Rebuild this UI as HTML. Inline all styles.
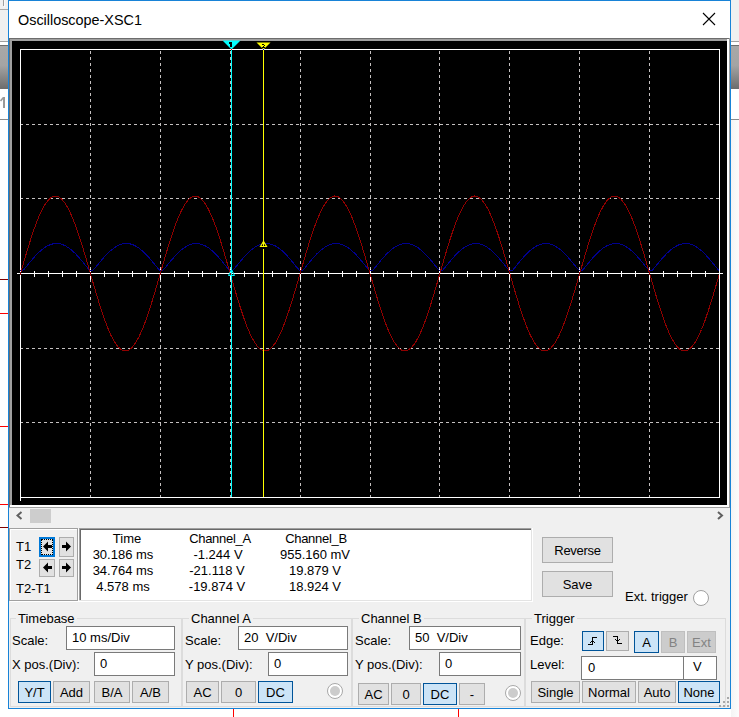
<!DOCTYPE html>
<html><head><meta charset="utf-8">
<style>
html,body{margin:0;padding:0;}
body{width:739px;height:717px;position:relative;overflow:hidden;background:#fff;font-family:"Liberation Sans",sans-serif;font-size:13px;color:#000;}
.a{position:absolute;}
.t{position:absolute;white-space:pre;line-height:15px;font-size:13px;}
.b{position:absolute;box-sizing:border-box;padding-top:1px;border:1px solid #adadad;background:#e1e1e1;text-align:center;white-space:pre;font-size:13px;}
.s{border-color:#005499;background:#cce4f7;}
.d{border-color:#bfbfbf;background:#cccccc;color:#838383;}
.i{position:absolute;box-sizing:border-box;border:1px solid #7a7a7a;background:#fff;}
.c{position:absolute;white-space:pre;line-height:15px;font-size:13px;width:120px;text-align:center;}
</style></head><body>
<!-- background app strips -->
<div class="a" style="left:0;top:0;width:739px;height:41px;background:#f0f0f0"></div>
<div class="a" style="left:0;top:41px;width:739px;height:1px;background:#a0a0a0"></div>
<div class="a" style="left:0;top:45px;width:739px;height:1px;background:#6e6e6e"></div>
<div class="a" style="left:0;top:46px;width:739px;height:43px;background:linear-gradient(#a8a8a8,#a4a4a4 45%,#6c6c6c)"></div>
<div class="a" style="left:0;top:119px;width:739px;height:1px;background:#8a8a8a"></div>
<div class="a" style="left:3px;top:0;width:1px;height:6px;background:#a0a0a0"></div>
<div class="a" style="left:4px;top:0;width:1px;height:7px;background:#fafafa"></div>
<div class="a" style="left:0;top:9px;width:8px;height:1px;background:#a8a8a8"></div>
<svg class="a" style="left:0;top:90px" width="8" height="20"><rect x="3" y="7" width="2" height="11" fill="#9a9a9a"/><path d="M0.5,11 L3.5,7.5" stroke="#9a9a9a" stroke-width="1.6"/></svg>
<div class="a" style="left:0;top:279px;width:8px;height:1px;background:#800000"></div>
<div class="a" style="left:0;top:313px;width:8px;height:1px;background:#ff0000"></div>
<div class="a" style="left:0;top:426px;width:8px;height:1px;background:#ff0000"></div>
<div class="a" style="left:0;top:504px;width:8px;height:1px;background:#ff0000"></div>
<div class="a" style="left:0;top:527px;width:8px;height:1px;background:#800000"></div>
<div class="a" style="left:233px;top:709px;width:1px;height:8px;background:#ff0000"></div>
<div class="a" style="left:458px;top:709px;width:1px;height:8px;background:#ff0000"></div>
<div class="a" style="left:731px;top:120px;width:8px;height:597px;background:linear-gradient(90deg,#f4f4f4,#fcfcfc)"></div>

<!-- window -->
<div class="a" style="left:8px;top:0;width:723px;height:709px;box-sizing:border-box;border:1px solid #1883d7;background:#f0f0f0"></div>
<div class="a" style="left:9px;top:1px;width:721px;height:37px;background:#fff"></div>
<div class="t" style="left:18px;top:12px;font-size:14.4px;line-height:16px">Oscilloscope-XSC1</div>
<svg class="a" style="left:0;top:0" width="739" height="40"><path d="M703,13 L715,25 M715,13 L703,25" stroke="#000" stroke-width="1.1"/></svg>

<!-- scope frame -->
<div class="a" style="left:9px;top:38px;width:721px;height:470px;background:#a0a0a0"></div>
<div class="a" style="left:9px;top:38px;width:720px;height:469px;background:#6d6d6d"></div>
<div class="a" style="left:10px;top:39px;width:719px;height:468px;background:#fff"></div>
<div class="a" style="left:10px;top:39px;width:717px;height:466px;background:#a0a0a0"></div>
<svg class="a" style="left:0;top:0" width="739" height="510" shape-rendering="crispEdges">
<rect x="12" y="41" width="715" height="464" fill="#000"/>
<path d="M90.5,51V497" stroke="#c4c0c0" stroke-dasharray="3 3"/>
<path d="M160.5,51V497" stroke="#c4c0c0" stroke-dasharray="3 3"/>
<path d="M230.5,51V497" stroke="#c4c0c0" stroke-dasharray="3 3"/>
<path d="M300.5,51V497" stroke="#c4c0c0" stroke-dasharray="3 3"/>
<path d="M370.5,51V497" stroke="#c4c0c0" stroke-dasharray="3 3"/>
<path d="M439.5,51V497" stroke="#c4c0c0" stroke-dasharray="3 3"/>
<path d="M509.5,51V497" stroke="#c4c0c0" stroke-dasharray="3 3"/>
<path d="M579.5,51V497" stroke="#c4c0c0" stroke-dasharray="3 3"/>
<path d="M649.5,51V497" stroke="#c4c0c0" stroke-dasharray="3 3"/>
<path d="M20,124.5H719" stroke="#c4c0c0" stroke-dasharray="3 3"/>
<path d="M20,198.5H719" stroke="#c4c0c0" stroke-dasharray="3 3"/>
<path d="M20,348.5H719" stroke="#c4c0c0" stroke-dasharray="3 3"/>
<path d="M20,422.5H719" stroke="#c4c0c0" stroke-dasharray="3 3"/>
<rect x="20" y="49" width="700" height="1" fill="#fff"/>
<rect x="20" y="497" width="700" height="1" fill="#fff"/>
<rect x="20" y="49" width="1" height="452" fill="#fff"/>
<rect x="719" y="50" width="1" height="448" fill="#fff"/>
<rect x="17" y="273" width="706" height="1" fill="#fff"/>
<rect x="34" y="271" width="1" height="6" fill="#fff"/>
<rect x="48" y="271" width="1" height="6" fill="#fff"/>
<rect x="62" y="271" width="1" height="6" fill="#fff"/>
<rect x="76" y="271" width="1" height="6" fill="#fff"/>
<rect x="90" y="269" width="1" height="11" fill="#fff"/>
<rect x="104" y="271" width="1" height="6" fill="#fff"/>
<rect x="118" y="271" width="1" height="6" fill="#fff"/>
<rect x="132" y="271" width="1" height="6" fill="#fff"/>
<rect x="146" y="271" width="1" height="6" fill="#fff"/>
<rect x="160" y="269" width="1" height="11" fill="#fff"/>
<rect x="174" y="271" width="1" height="6" fill="#fff"/>
<rect x="188" y="271" width="1" height="6" fill="#fff"/>
<rect x="202" y="271" width="1" height="6" fill="#fff"/>
<rect x="216" y="271" width="1" height="6" fill="#fff"/>
<rect x="230" y="269" width="1" height="11" fill="#fff"/>
<rect x="244" y="271" width="1" height="6" fill="#fff"/>
<rect x="258" y="271" width="1" height="6" fill="#fff"/>
<rect x="272" y="271" width="1" height="6" fill="#fff"/>
<rect x="286" y="271" width="1" height="6" fill="#fff"/>
<rect x="300" y="269" width="1" height="11" fill="#fff"/>
<rect x="314" y="271" width="1" height="6" fill="#fff"/>
<rect x="328" y="271" width="1" height="6" fill="#fff"/>
<rect x="342" y="271" width="1" height="6" fill="#fff"/>
<rect x="356" y="271" width="1" height="6" fill="#fff"/>
<rect x="370" y="269" width="1" height="11" fill="#fff"/>
<rect x="383" y="271" width="1" height="6" fill="#fff"/>
<rect x="397" y="271" width="1" height="6" fill="#fff"/>
<rect x="411" y="271" width="1" height="6" fill="#fff"/>
<rect x="425" y="271" width="1" height="6" fill="#fff"/>
<rect x="439" y="269" width="1" height="11" fill="#fff"/>
<rect x="453" y="271" width="1" height="6" fill="#fff"/>
<rect x="467" y="271" width="1" height="6" fill="#fff"/>
<rect x="481" y="271" width="1" height="6" fill="#fff"/>
<rect x="495" y="271" width="1" height="6" fill="#fff"/>
<rect x="509" y="269" width="1" height="11" fill="#fff"/>
<rect x="523" y="271" width="1" height="6" fill="#fff"/>
<rect x="537" y="271" width="1" height="6" fill="#fff"/>
<rect x="551" y="271" width="1" height="6" fill="#fff"/>
<rect x="565" y="271" width="1" height="6" fill="#fff"/>
<rect x="579" y="269" width="1" height="11" fill="#fff"/>
<rect x="593" y="271" width="1" height="6" fill="#fff"/>
<rect x="607" y="271" width="1" height="6" fill="#fff"/>
<rect x="621" y="271" width="1" height="6" fill="#fff"/>
<rect x="635" y="271" width="1" height="6" fill="#fff"/>
<rect x="649" y="269" width="1" height="11" fill="#fff"/>
<rect x="663" y="271" width="1" height="6" fill="#fff"/>
<rect x="677" y="271" width="1" height="6" fill="#fff"/>
<rect x="691" y="271" width="1" height="6" fill="#fff"/>
<rect x="705" y="271" width="1" height="6" fill="#fff"/>
<polyline points="20.0,270.5 23.5,270.0 27.0,265.8 30.5,261.5 34.0,257.4 37.5,253.6 41.0,250.4 44.5,247.7 48.0,245.6 51.5,244.2 55.0,243.5 58.4,243.5 61.9,244.3 65.4,245.8 68.9,248.0 72.4,250.8 75.9,254.1 79.4,258.0 82.9,262.1 86.4,266.5 89.9,270.5 93.4,270.0 96.9,265.8 100.4,261.5 103.9,257.4 107.4,253.6 110.9,250.4 114.4,247.7 117.9,245.6 121.4,244.2 124.8,243.5 128.3,243.5 131.8,244.3 135.3,245.8 138.8,248.0 142.3,250.8 145.8,254.1 149.3,258.0 152.8,262.1 156.3,266.5 159.8,270.5 163.3,270.0 166.8,265.8 170.3,261.5 173.8,257.4 177.3,253.6 180.8,250.4 184.3,247.7 187.8,245.6 191.3,244.2 194.8,243.5 198.2,243.5 201.7,244.3 205.2,245.8 208.7,248.0 212.2,250.8 215.7,254.1 219.2,258.0 222.7,262.1 226.2,266.5 229.7,270.5 233.2,270.0 236.7,265.8 240.2,261.5 243.7,257.4 247.2,253.6 250.7,250.4 254.2,247.7 257.7,245.6 261.2,244.2 264.6,243.5 268.1,243.5 271.6,244.3 275.1,245.8 278.6,248.0 282.1,250.8 285.6,254.1 289.1,258.0 292.6,262.1 296.1,266.5 299.6,270.5 303.1,270.0 306.6,265.8 310.1,261.5 313.6,257.4 317.1,253.6 320.6,250.4 324.1,247.7 327.6,245.6 331.1,244.2 334.6,243.5 338.0,243.5 341.5,244.3 345.0,245.8 348.5,248.0 352.0,250.8 355.5,254.1 359.0,258.0 362.5,262.1 366.0,266.5 369.5,270.5 373.0,270.0 376.5,265.8 380.0,261.5 383.5,257.4 387.0,253.6 390.5,250.4 394.0,247.7 397.5,245.6 401.0,244.2 404.4,243.5 407.9,243.5 411.4,244.3 414.9,245.8 418.4,248.0 421.9,250.8 425.4,254.1 428.9,258.0 432.4,262.1 435.9,266.5 439.4,270.5 442.9,270.0 446.4,265.8 449.9,261.5 453.4,257.4 456.9,253.6 460.4,250.4 463.9,247.7 467.4,245.6 470.9,244.2 474.4,243.5 477.8,243.5 481.3,244.3 484.8,245.8 488.3,248.0 491.8,250.8 495.3,254.1 498.8,258.0 502.3,262.1 505.8,266.5 509.3,270.5 512.8,270.0 516.3,265.8 519.8,261.5 523.3,257.4 526.8,253.6 530.3,250.4 533.8,247.7 537.3,245.6 540.8,244.2 544.2,243.5 547.7,243.5 551.2,244.3 554.7,245.8 558.2,248.0 561.7,250.8 565.2,254.1 568.7,258.0 572.2,262.1 575.7,266.5 579.2,270.5 582.7,270.0 586.2,265.8 589.7,261.5 593.2,257.4 596.7,253.6 600.2,250.4 603.7,247.7 607.2,245.6 610.7,244.2 614.1,243.5 617.6,243.5 621.1,244.3 624.6,245.8 628.1,248.0 631.6,250.8 635.1,254.1 638.6,258.0 642.1,262.1 645.6,266.5 649.1,270.5 652.6,270.0 656.1,265.8 659.6,261.5 663.1,257.4 666.6,253.6 670.1,250.4 673.6,247.7 677.1,245.6 680.6,244.2 684.0,243.5 687.5,243.5 691.0,244.3 694.5,245.8 698.0,248.0 701.5,250.8 705.0,254.1 708.5,258.0 712.0,262.1 715.5,266.5 719.0,270.5" fill="none" stroke="#000090" stroke-width="1"/>
<polyline points="20.0,275.2 23.5,263.1 27.0,251.2 30.5,239.9 34.0,229.4 37.5,219.9 41.0,211.8 44.5,205.3 48.0,200.3 51.5,197.2 55.0,196.0 58.4,196.7 61.9,199.3 65.4,203.7 68.9,209.8 72.4,217.5 75.9,226.5 79.4,236.8 82.9,247.9 86.4,259.7 89.9,271.8 93.4,283.9 96.9,295.8 100.4,307.1 103.9,317.6 107.4,327.1 110.9,335.2 114.4,341.7 117.9,346.7 121.4,349.8 124.8,351.0 128.3,350.3 131.8,347.7 135.3,343.3 138.8,337.2 142.3,329.5 145.8,320.5 149.3,310.2 152.8,299.1 156.3,287.3 159.8,275.2 163.3,263.1 166.8,251.2 170.3,239.9 173.8,229.4 177.3,219.9 180.8,211.8 184.3,205.3 187.8,200.3 191.3,197.2 194.8,196.0 198.2,196.7 201.7,199.3 205.2,203.7 208.7,209.8 212.2,217.5 215.7,226.5 219.2,236.8 222.7,247.9 226.2,259.7 229.7,271.8 233.2,283.9 236.7,295.8 240.2,307.1 243.7,317.6 247.2,327.1 250.7,335.2 254.2,341.7 257.7,346.7 261.2,349.8 264.6,351.0 268.1,350.3 271.6,347.7 275.1,343.3 278.6,337.2 282.1,329.5 285.6,320.5 289.1,310.2 292.6,299.1 296.1,287.3 299.6,275.2 303.1,263.1 306.6,251.2 310.1,239.9 313.6,229.4 317.1,219.9 320.6,211.8 324.1,205.3 327.6,200.3 331.1,197.2 334.6,196.0 338.0,196.7 341.5,199.3 345.0,203.7 348.5,209.8 352.0,217.5 355.5,226.5 359.0,236.8 362.5,247.9 366.0,259.7 369.5,271.8 373.0,283.9 376.5,295.8 380.0,307.1 383.5,317.6 387.0,327.1 390.5,335.2 394.0,341.7 397.5,346.7 401.0,349.8 404.4,351.0 407.9,350.3 411.4,347.7 414.9,343.3 418.4,337.2 421.9,329.5 425.4,320.5 428.9,310.2 432.4,299.1 435.9,287.3 439.4,275.2 442.9,263.1 446.4,251.2 449.9,239.9 453.4,229.4 456.9,219.9 460.4,211.8 463.9,205.3 467.4,200.3 470.9,197.2 474.4,196.0 477.8,196.7 481.3,199.3 484.8,203.7 488.3,209.8 491.8,217.5 495.3,226.5 498.8,236.8 502.3,247.9 505.8,259.7 509.3,271.8 512.8,283.9 516.3,295.8 519.8,307.1 523.3,317.6 526.8,327.1 530.3,335.2 533.8,341.7 537.3,346.7 540.8,349.8 544.2,351.0 547.7,350.3 551.2,347.7 554.7,343.3 558.2,337.2 561.7,329.5 565.2,320.5 568.7,310.2 572.2,299.1 575.7,287.3 579.2,275.2 582.7,263.1 586.2,251.2 589.7,239.9 593.2,229.4 596.7,219.9 600.2,211.8 603.7,205.3 607.2,200.3 610.7,197.2 614.1,196.0 617.6,196.7 621.1,199.3 624.6,203.7 628.1,209.8 631.6,217.5 635.1,226.5 638.6,236.8 642.1,247.9 645.6,259.7 649.1,271.8 652.6,283.9 656.1,295.8 659.6,307.1 663.1,317.6 666.6,327.1 670.1,335.2 673.6,341.7 677.1,346.7 680.6,349.8 684.0,351.0 687.5,350.3 691.0,347.7 694.5,343.3 698.0,337.2 701.5,329.5 705.0,320.5 708.5,310.2 712.0,299.1 715.5,287.3 719.0,275.2" fill="none" stroke="#900000" stroke-width="1"/>
<rect x="231" y="49" width="1" height="448" fill="#00ffff"/>
<rect x="263" y="49" width="1" height="448" fill="#ffff00"/>
<polygon points="222.5,40.5 240.5,40.5 231.5,49.5" fill="#00ffff" shape-rendering="auto"/>
<polygon points="256.5,42.5 270.5,42.5 263.5,49.5" fill="#ffff00" shape-rendering="auto"/>
<rect x="229" y="42" width="1" height="2" fill="#000"/>
<rect x="230" y="42" width="2" height="5" fill="#000"/>
<rect x="262" y="44" width="2" height="1" fill="#000"/>
<rect x="264" y="45" width="1" height="1" fill="#000"/>
<rect x="263" y="46" width="1" height="1" fill="#000"/>
<rect x="262" y="47" width="3" height="1" fill="#000"/>
<rect x="231" y="49" width="1" height="1" fill="#ff0000"/>
<rect x="263" y="49" width="1" height="1" fill="#0000ff"/>
<path d="M228.5,275.5 L231.5,269.5 L234.5,275.5 Z" fill="none" stroke="#00ffff" stroke-width="1" shape-rendering="auto"/>
<rect x="263" y="247" width="1" height="2" fill="#000"/>
<path d="M260.5,246.5 L263.5,241.5 L266.5,246.5 Z" fill="none" stroke="#ffff00" stroke-width="1.2" shape-rendering="auto"/>
</svg>

<!-- scrollbar -->
<div class="a" style="left:9px;top:508px;width:721px;height:20px;background:#f0f0f0"></div>
<div class="a" style="left:30px;top:509px;width:21px;height:14px;background:#cdcdcd"></div>
<svg class="a" style="left:0;top:500px" width="739" height="30"><path d="M21.5,12 L17.5,15.5 L21.5,19 M718,12 L722,15.5 L718,19" stroke="#606060" stroke-width="2" fill="none"/></svg>

<!-- T panel (etched) -->
<div class="a" style="left:10px;top:529px;width:69px;height:73px;box-sizing:border-box;border:1px solid #fff"></div>
<div class="a" style="left:9px;top:528px;width:69px;height:73px;box-sizing:border-box;border:1px solid #a0a0a0"></div>
<div class="t" style="left:16px;top:539px">T1</div>
<div class="t" style="left:16px;top:557px">T2</div>
<div class="t" style="left:16px;top:581px">T2-T1</div>
<div class="b" style="left:39px;top:537px;width:16px;height:20px;border:2px solid #0078d7"></div>
<div class="a" style="left:41px;top:539px;width:12px;height:16px;box-sizing:border-box;border:1px dotted #000"></div>
<div class="b" style="left:59px;top:537px;width:15px;height:20px"></div>
<div class="b" style="left:39px;top:559px;width:16px;height:18px"></div>
<div class="b" style="left:59px;top:559px;width:15px;height:18px"></div>
<svg class="a" style="left:0;top:530px" width="80" height="60"><g transform="translate(0,-0.5)">
<path d="M43,17 L48,12 L48,15.5 L52,15.5 L52,18.5 L48,18.5 L48,22 Z" fill="#000"/>
<path d="M71,17 L66,12 L66,15.5 L62,15.5 L62,18.5 L66,18.5 L66,22 Z" fill="#000"/>
<path d="M43,38 L48,33 L48,36.5 L52,36.5 L52,39.5 L48,39.5 L48,43 Z" fill="#000"/>
<path d="M71,38 L66,33 L66,36.5 L62,36.5 L62,39.5 L66,39.5 L66,43 Z" fill="#000"/>
</g></svg>

<!-- readout (sunken) -->
<div class="a" style="left:79px;top:528px;width:454px;height:74px;background:#fff"></div>
<div class="a" style="left:79px;top:528px;width:453px;height:73px;background:#e3e3e3"></div>
<div class="a" style="left:79px;top:528px;width:452px;height:72px;background:#a0a0a0"></div>
<div class="a" style="left:80px;top:529px;width:451px;height:71px;background:#696969"></div>
<div class="a" style="left:81px;top:530px;width:450px;height:70px;background:#fff"></div>
<div class="c" style="left:67px;top:531px">Time</div>
<div class="c" style="left:160px;top:531px;letter-spacing:-0.3px">Channel_A</div>
<div class="c" style="left:256px;top:531px;letter-spacing:-0.3px">Channel_B</div>
<div class="c" style="left:63px;top:547px">30.186 ms</div>
<div class="c" style="left:158px;top:547px">-1.244 V</div>
<div class="c" style="left:255px;top:547px">955.160 mV</div>
<div class="c" style="left:63px;top:563px">34.764 ms</div>
<div class="c" style="left:157px;top:563px">-21.118 V</div>
<div class="c" style="left:255px;top:563px">19.879 V</div>
<div class="c" style="left:63px;top:579px">4.578 ms</div>
<div class="c" style="left:157px;top:579px">-19.874 V</div>
<div class="c" style="left:255px;top:579px">18.924 V</div>

<div class="b" style="left:542px;top:537px;width:71px;height:26px;line-height:24px;letter-spacing:-0.3px">Reverse</div>
<div class="b" style="left:542px;top:571px;width:71px;height:26px;line-height:24px">Save</div>
<div class="t" style="left:625px;top:589px">Ext. trigger</div>
<div class="a" style="left:693px;top:590px;width:16px;height:16px;box-sizing:border-box;border:1px solid #a0a0a0;border-radius:50%;background:#fff"></div>

<!-- group boxes -->
<div class="a" style="left:10px;top:618px;width:172px;height:89px;box-sizing:border-box;border:1px solid #dcdcdc"></div>
<div class="a" style="left:182px;top:618px;width:170px;height:89px;box-sizing:border-box;border:1px solid #dcdcdc"></div>
<div class="a" style="left:352px;top:618px;width:173px;height:89px;box-sizing:border-box;border:1px solid #dcdcdc"></div>
<div class="a" style="left:525px;top:618px;width:201px;height:89px;box-sizing:border-box;border:1px solid #dcdcdc"></div>
<div class="t" style="left:16px;top:611px;background:#f0f0f0;padding:0 2px">Timebase</div>
<div class="t" style="left:189px;top:611px;background:#f0f0f0;padding:0 2px">Channel A</div>
<div class="t" style="left:359px;top:611px;background:#f0f0f0;padding:0 2px">Channel B</div>
<div class="t" style="left:532px;top:611px;background:#f0f0f0;padding:0 2px">Trigger</div>

<!-- Timebase -->
<div class="t" style="left:12px;top:633px">Scale:</div>
<div class="t" style="left:12px;top:657px">X pos.(Div):</div>
<div class="i" style="left:66px;top:626px;width:109px;height:24px"></div>
<div class="t" style="left:72px;top:630px">10 ms/Div</div>
<div class="i" style="left:94px;top:652px;width:81px;height:24px"></div>
<div class="t" style="left:100px;top:656px">0</div>
<div class="b s" style="left:18px;top:681px;width:33px;height:22px;line-height:20px">Y/T</div>
<div class="b" style="left:53px;top:681px;width:37px;height:22px;line-height:20px">Add</div>
<div class="b" style="left:94px;top:681px;width:36px;height:22px;line-height:20px">B/A</div>
<div class="b" style="left:132px;top:681px;width:37px;height:22px;line-height:20px">A/B</div>

<!-- Channel A -->
<div class="t" style="left:185px;top:633px">Scale:</div>
<div class="t" style="left:185px;top:657px">Y pos.(Div):</div>
<div class="i" style="left:238px;top:626px;width:110px;height:24px"></div>
<div class="t" style="left:244px;top:630px">20  V/Div</div>
<div class="i" style="left:268px;top:652px;width:80px;height:24px"></div>
<div class="t" style="left:274px;top:656px">0</div>
<div class="b" style="left:186px;top:681px;width:33px;height:22px;line-height:20px">AC</div>
<div class="b" style="left:221px;top:681px;width:35px;height:22px;line-height:20px">0</div>
<div class="b s" style="left:258px;top:681px;width:35px;height:22px;line-height:20px">DC</div>
<div class="a" style="left:327px;top:683px;width:16px;height:16px;box-sizing:border-box;border:1px solid #a8a8a8;border-radius:50%;background:#fff"></div>
<div class="a" style="left:330px;top:686px;width:10px;height:10px;border-radius:50%;background:#cccccc"></div>

<!-- Channel B -->
<div class="t" style="left:355px;top:633px">Scale:</div>
<div class="t" style="left:355px;top:657px">Y pos.(Div):</div>
<div class="i" style="left:409px;top:626px;width:112px;height:24px"></div>
<div class="t" style="left:415px;top:630px">50  V/Div</div>
<div class="i" style="left:439px;top:652px;width:82px;height:24px"></div>
<div class="t" style="left:445px;top:656px">0</div>
<div class="b" style="left:358px;top:683px;width:31px;height:22px;line-height:20px">AC</div>
<div class="b" style="left:391px;top:683px;width:30px;height:22px;line-height:20px">0</div>
<div class="b s" style="left:423px;top:683px;width:34px;height:22px;line-height:20px">DC</div>
<div class="b" style="left:459px;top:683px;width:26px;height:22px;line-height:20px">-</div>
<div class="a" style="left:505px;top:685px;width:16px;height:16px;box-sizing:border-box;border:1px solid #a8a8a8;border-radius:50%;background:#fff"></div>
<div class="a" style="left:508px;top:688px;width:10px;height:10px;border-radius:50%;background:#cccccc"></div>

<!-- Trigger -->
<div class="t" style="left:530px;top:633px">Edge:</div>
<div class="t" style="left:530px;top:657px">Level:</div>
<div class="b s" style="left:582px;top:631px;width:22px;height:20px"></div>
<div class="b" style="left:606px;top:631px;width:23px;height:20px"></div>
<svg class="a" style="left:0;top:0" width="739" height="717" shape-rendering="crispEdges" fill="#000">
<rect x="588" y="644" width="5" height="1"/><rect x="592" y="637" width="1" height="8"/><rect x="592" y="637" width="5" height="1"/>
<rect x="590" y="642" width="1" height="1"/><rect x="591" y="641" width="1" height="1"/><rect x="593" y="641" width="1" height="1"/><rect x="594" y="642" width="1" height="1"/>
<rect x="613" y="636" width="5" height="1"/><rect x="617" y="636" width="1" height="8"/><rect x="617" y="643" width="5" height="1"/>
<rect x="615" y="639" width="1" height="1"/><rect x="616" y="640" width="1" height="1"/><rect x="618" y="640" width="1" height="1"/><rect x="619" y="639" width="1" height="1"/>
</svg>
<div class="b s" style="left:634px;top:631px;width:25px;height:22px;line-height:20px">A</div>
<div class="b d" style="left:661px;top:631px;width:24px;height:22px;line-height:20px">B</div>
<div class="b d" style="left:687px;top:631px;width:29px;height:22px;line-height:20px">Ext</div>
<div class="i" style="left:581px;top:656px;width:103px;height:24px"></div>
<div class="t" style="left:588px;top:660px">0</div>
<div class="i" style="left:683px;top:656px;width:34px;height:24px"></div>
<div class="t" style="left:693px;top:659px">V</div>
<div class="b" style="left:531px;top:681px;width:49px;height:22px;line-height:20px">Single</div>
<div class="b" style="left:582px;top:681px;width:54px;height:22px;line-height:20px">Normal</div>
<div class="b" style="left:638px;top:681px;width:38px;height:22px;line-height:20px">Auto</div>
<div class="b s" style="left:678px;top:681px;width:42px;height:22px;line-height:20px">None</div>
<svg class="a" style="left:715px;top:692px" width="16" height="16" fill="#a8a8a8">
<rect x="12" y="5" width="2" height="2"/><rect x="8" y="9" width="2" height="2"/><rect x="12" y="9" width="2" height="2"/>
<rect x="4" y="13" width="2" height="2"/><rect x="8" y="13" width="2" height="2"/><rect x="12" y="13" width="2" height="2"/>
</svg>
</body></html>
